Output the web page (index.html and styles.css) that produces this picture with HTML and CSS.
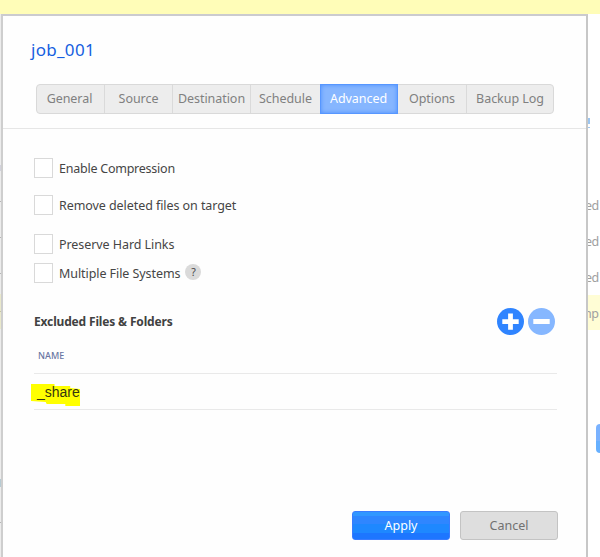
FILE: index.html
```html
<!DOCTYPE html>
<html lang="en">
<head>
<meta charset="utf-8">
<title>job_001</title>
<link rel="stylesheet" href="styles.css">
</head>
<body>
<div class="page">
  <div class="notice"></div>
  <div class="sliver left">
    <i class="mark header"></i><i class="mark"></i><i class="mark"></i><i class="mark"></i><i class="mark selected"></i><i class="mark teal"></i><i class="mark end"></i>
  </div>
  <div class="sliver right">
    <div class="link-end"></div>
    <div class="status"><span>ed</span></div>
    <div class="status"><span>ed</span></div>
    <div class="status"><span>ed</span></div>
    <div class="status current"><span>np</span></div>
    <div class="side-button"></div>
  </div>
</div>
<main class="dialog">
  <header class="head">
    <h1 class="title">job_001</h1>
    <nav class="tabs">
      <span class="tab general">General</span>
      <span class="tab source">Source</span>
      <span class="tab destination">Destination</span>
      <span class="tab schedule">Schedule</span>
      <span class="tab advanced">Advanced</span>
      <span class="tab options">Options</span>
      <span class="tab log">Backup Log</span>
    </nav>
  </header>
  <section class="options-list">
    <label class="check"><span class="box"></span><span class="text compression">Enable Compression</span></label>
    <label class="check gap-remove"><span class="box"></span><span class="text">Remove deleted files on target</span></label>
    <label class="check gap-links"><span class="box"></span><span class="text">Preserve Hard Links</span></label>
    <label class="check gap-systems"><span class="box"></span><span class="text">Multiple File Systems</span><span class="help">?</span></label>
  </section>
  <section class="excluded">
    <div class="excluded-head">
      <h2 class="heading">Excluded Files &amp; Folders</h2>
      <svg class="round" viewBox="0 0 26 26"><circle cx="13" cy="13" r="13" fill="#2f84ff"/><path d="M13 5.2v15.8M5.1 13.2h15.8" stroke="#fff" stroke-width="4.6"/></svg>
      <svg class="round" viewBox="0 0 26 26"><circle cx="13" cy="13" r="13" fill="#86b7ff"/><path d="M5.1 13h15.8" stroke="#fff" stroke-width="4.8"/></svg>
    </div>
    <div class="column">NAME</div>
    <div class="row"><span class="marked">_share</span></div>
  </section>
  <footer class="actions">
    <button class="button apply">Apply</button>
    <button class="button cancel">Cancel</button>
  </footer>
</main>
</body>
</html>
```
FILE: styles.css
```css
* { box-sizing: border-box; }
html, body { margin: 0; height: 557px; overflow: hidden; }
body { position: relative; background: #fff; font: 12.5px/20px "Noto Sans", sans-serif; color: #454545; }
.page { height: 557px; display: grid; grid-template: 14px 1fr / 8px 1fr 13px; }
.notice { grid-column: 1 / -1; background: #fffdb8; }
.left { grid-column: 1; display: flex; flex-direction: column; background: #ececec; }
.mark { display: block; height: 1px; margin-top: 35px; background: #b5b5b5; }
.mark.header { height: 6px; margin-top: 151px; background: #d2d2dc; margin-bottom: -5px; }
.mark.selected { height: 35px; margin-top: 20px; background: linear-gradient(#e9e8cb 17px, #c4c3a6 17px 18px, #e9e8cb 18px); }
.mark.teal { height: 8px; margin-top: 150px; background: #b7cbd3; }
.mark.end { margin-top: 35px; }
.right { grid-column: 3; display: flex; flex-direction: column; overflow: hidden; }
.link-end { width: 2px; height: 10px; margin-top: 104px; margin-left: 1px; background: linear-gradient(#9cc6f1 6px, #fff 6px 9px, #9cc6f1 9px); }
.status { height: 36px; line-height: 38px; color: #a0a0a0; font-size: 12.5px; flex: none; margin-left: -2px; }
.status:nth-child(2) { margin-top: 59px; }
.status span { letter-spacing: -.6px; }
.current { height: 35px; background: #fffdd5; margin-left: 0; text-indent: -3px; }
.side-button { flex: none; height: 29px; margin: 94px 0 0 9px; border-radius: 4px 0 0 4px; background: linear-gradient(#7ab2ff 60%, #66b0ff 60%); }
.dialog { position: absolute; left: 1px; top: 14px; width: 587px; height: 560px; border: 2px solid #cbcbcf; border-right-color: #c7c7c7; border-left: 2px solid #cecece; background: #fefefe; }
.head { height: 113px; border-bottom: 1px solid #e6e6e6; padding: 22px 0 0 28px; }
.title { margin: 0; height: 24px; font-size: 17px; line-height: 24px; font-weight: 400; color: #165fe0; letter-spacing: .3px; }
.tabs { display: flex; width: 518px; height: 30px; margin: 22px 0 0 5px; border: 1px solid #d9d9d9; border-radius: 4px; background: #ededed; color: #808080; letter-spacing: -.05px; }
.tab { display: flex; align-items: center; justify-content: center; border-right: 1px solid #dadada; white-space: nowrap; }
.general { width: 68px; padding-right: 2px; }
.source { width: 68px; }
.destination { width: 78px; }
.schedule { width: 69px; border-right: 0; }
.advanced { width: 78px; margin: -1px 0; padding-right: 1px; border: 1px solid #5797ff; background: #86b6ff; box-shadow: inset 0 0 4px #4c8fff; color: #fff; }
.options { width: 69px; }
.log { flex: 1; border: 0; }
.options-list { display: flex; flex-direction: column; padding: 29px 0 0 31px; }
.check { display: flex; align-items: center; height: 20px; }
.box { width: 19px; height: 20px; margin-right: 6px; border: 1px solid #d9d9d9; background: #fff; }
.text { padding-top: 2px; letter-spacing: -.07px; }
.compression { letter-spacing: -.24px; }
.gap-remove { margin-top: 17px; }
.gap-links { margin-top: 19px; }
.gap-systems { margin-top: 9px; }
.help { width: 16px; height: 16px; margin: -3px 0 0 5px; border-radius: 50%; background: #dadada; font-size: 10.5px; line-height: 16px; text-align: center; }
.excluded { margin: 25px 0 0 31px; width: 523px; }
.excluded-head { display: flex; align-items: center; height: 27px; padding-right: 2px; }
.heading { margin: 0 auto 0 0; font-size: 12px; font-weight: 700; color: #414141; letter-spacing: -.16px; }
.round { width: 27px; height: 27px; margin-left: 4px; }
.column { height: 39px; padding: 11px 0 0 4px; border-bottom: 1px solid #e9e9e9; font-size: 9px; font-weight: 500; color: #6876a2; }
.row { height: 36px; padding-top: 10px; border-bottom: 1px solid #e9e9e9; }
.marked { display: block; width: 49px; height: 22px; margin-left: -3px; padding-left: 6px; font: 14px/17px "Liberation Sans", Arial, sans-serif; color: #35350f; background: #ff0; clip-path: polygon(0 0, 48% 0, 48% 2px, 80% 2px, 80% 4px, 100% 5px, 100% 100%, 70% 100%, 70% 20px, 32% 20px, 30% 18px, 0 17px); }
.actions { display: flex; gap: 10px; margin: 101px 0 0 349px; }
.button { height: 29px; padding: 0; border: 1px solid #397cff; border-radius: 3px; font: inherit; }
.apply { width: 98px; color: #fff; background: linear-gradient(#3197ff 14%, #2f86ff 14% 43%, #1e88ff 43% 77%, #1d76ff 77%); }
.cancel { width: 98px; color: #717171; background: #dedede; border-color: #c3c3c3; }
```
